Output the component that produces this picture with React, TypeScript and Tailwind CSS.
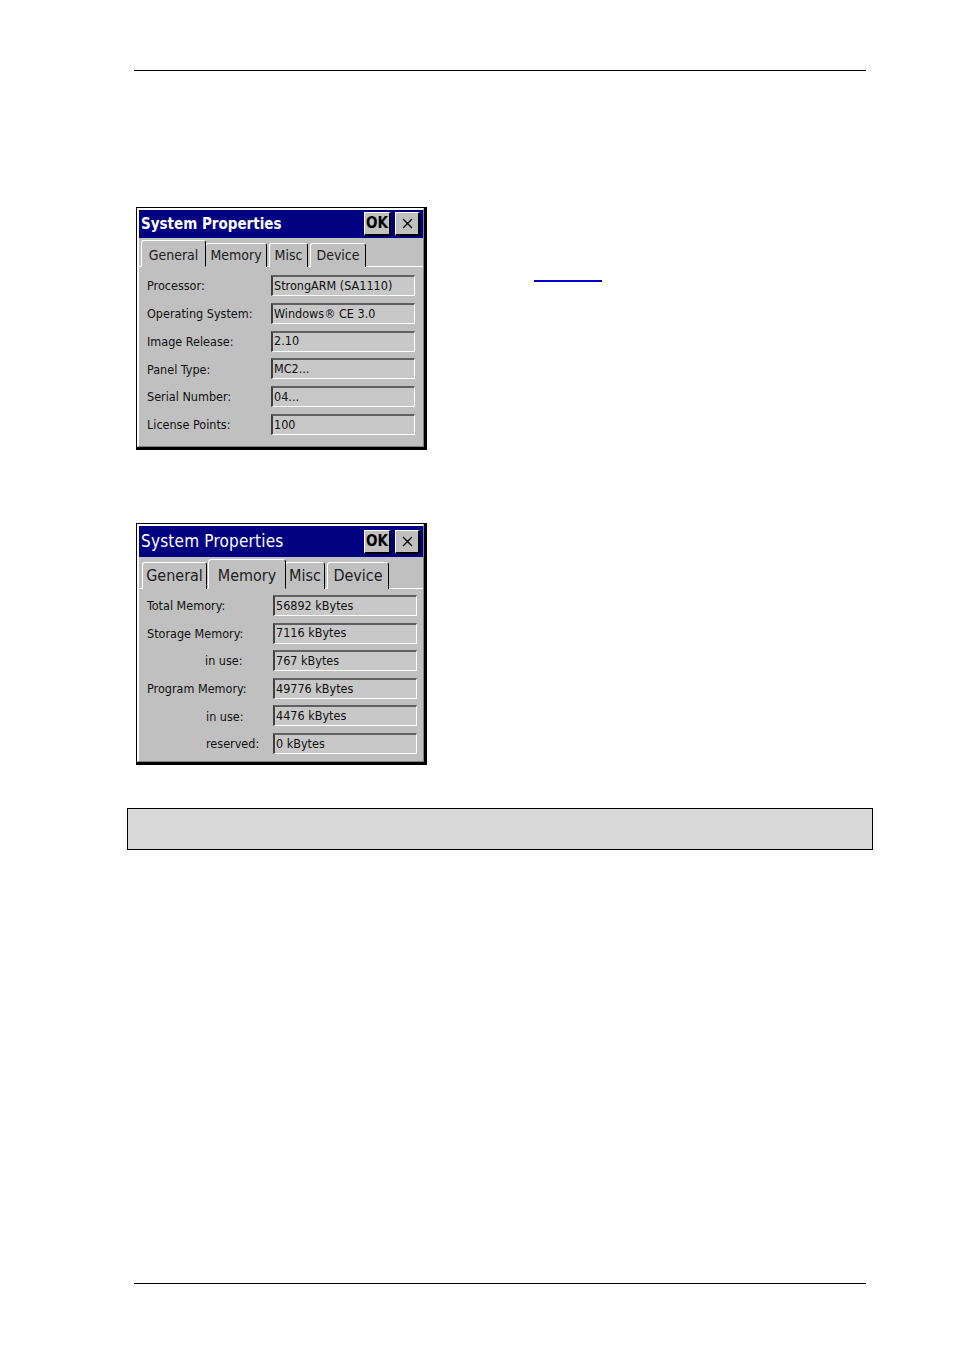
import React from "react";

const font = { fontFamily: "Tahoma, 'DejaVu Sans Condensed', 'Liberation Sans', sans-serif" };

function TitleBar({ big }: { big?: boolean }) {
  return (
    <div className={`flex items-center justify-between bg-[#000080] pl-[2px] pr-[3px] ${big ? "h-[31px]" : "h-[28px]"}`}>
      <span
        className={`text-white ${big ? "text-[17px] font-normal" : "text-[15px] font-bold"} leading-none`}
        style={{ fontFamily: "'DejaVu Sans Condensed', 'Liberation Sans', sans-serif", letterSpacing: big ? "0.2px" : "0px" }}
      >
        System Properties
      </span>
      <div className="flex items-center gap-[4px]">
        <div className="flex h-[24px] w-[27px] items-center justify-center border-t border-l border-t-white border-l-white border-r-2 border-b-2 border-r-black border-b-black bg-[#c0c0c0] text-[15px] font-bold leading-none text-black" style={{ fontFamily: "'DejaVu Sans Condensed', sans-serif" }}>
          OK
        </div>
        <div className="flex h-[24px] w-[25px] items-center justify-center border-t border-l border-t-white border-l-white border-r-2 border-b-2 border-r-black border-b-black bg-[#c0c0c0] text-black">
          <svg width="11" height="11" viewBox="0 0 11 11">
            <path d="M1 1 L10 10 M10 1 L1 10" stroke="black" strokeWidth="1.4" />
          </svg>
        </div>
      </div>
    </div>
  );
}

function Tabs({ tabs, selected, big }: { tabs: { label: string; w: number }[]; selected: number; big?: boolean }) {
  return (
    <div className={`relative flex items-end pl-[3px] ${big ? "h-[32px]" : "h-[29px]"}`}>
      <div className="absolute bottom-0 left-0 right-0 h-px bg-white" />
      {tabs.map((t, i) => {
        const sel = i === selected;
        return (
          <div
            key={t.label}
            style={{ width: t.w }}
            className={`relative flex items-end justify-center rounded-t-[3px] border-t border-l border-t-white border-l-white border-r border-r-black bg-[#c0c0c0] ${sel ? (big ? "h-[30px] -mx-px z-10 border-b border-b-[#c0c0c0] pb-[4px]" : "h-[27px] -mx-px z-10 border-b border-b-[#c0c0c0] pb-[4px]") : big ? "h-[27px] mr-[2px] pb-[5px]" : "h-[24px] mr-[2px] pb-[5px]"}`}
          >
            <span className={`${big ? "text-[16px]" : "text-[14px]"} leading-none text-[#202020]`} style={{ fontFamily: "'DejaVu Sans Condensed', 'Liberation Sans', sans-serif" }}>
              {t.label}
            </span>
          </div>
        );
      })}
    </div>
  );
}

function Row({ label, value, indent, fieldLeft }: { label: string; value: string; indent?: number; fieldLeft: number }) {
  return (
    <div className="flex h-[21px] items-center">
      <div style={{ width: fieldLeft, paddingLeft: indent ?? 0 }} className="pt-[2px] text-[12.5px] leading-none text-[#101010]">
        <span style={{ fontFamily: "'DejaVu Sans Condensed', 'Liberation Sans', sans-serif" }}>{label}</span>
      </div>
      <div className="flex h-[21px] w-[144px] items-center border-t-2 border-l-2 border-t-[#606060] border-l-[#404040] border-r border-b border-r-white border-b-white bg-[#c8c8c8] pl-px text-[12.5px] leading-none text-[#101010]">
        <span style={{ fontFamily: "'DejaVu Sans Condensed', 'Liberation Sans', sans-serif" }}>{value}</span>
      </div>
    </div>
  );
}

function Dialog({ children }: { children: React.ReactNode }) {
  return (
    <div className="w-[291px] border-t border-l border-black border-r-[3px] border-b-[3px] bg-[#c0c0c0]">
      <div className="border-t-2 border-l-2 border-white border-r border-b border-r-[#808080] border-b-[#808080]">{children}</div>
    </div>
  );
}

export default function App() {
  return (
    <div className="relative h-[1350px] w-[954px] bg-white" style={font}>
      <div className="absolute left-[134px] top-[70px] h-px w-[732px] bg-black" />

      <div className="absolute left-[136px] top-[207px]">
        <Dialog>
          <TitleBar />
          <Tabs
            selected={0}
            tabs={[
              { label: "General", w: 65 },
              { label: "Memory", w: 62 },
              { label: "Misc", w: 39 },
              { label: "Device", w: 56 },
            ]}
          />
          <div className="flex flex-col gap-[6.8px] pl-[8px] pt-[8px] pb-[11px]">
            <Row fieldLeft={124} label="Processor:" value="StrongARM (SA1110)" />
            <Row fieldLeft={124} label="Operating System:" value="Windows® CE 3.0" />
            <Row fieldLeft={124} label="Image Release:" value="2.10" />
            <Row fieldLeft={124} label="Panel Type:" value="MC2..." />
            <Row fieldLeft={124} label="Serial Number:" value="04..." />
            <Row fieldLeft={124} label="License Points:" value="100" />
          </div>
        </Dialog>
      </div>

      <div className="absolute left-[534px] top-[280px] h-[2px] w-[68px] bg-[#0000cc]" />

      <div className="absolute left-[136px] top-[523px]">
        <Dialog>
          <TitleBar big />
          <Tabs
            big
            selected={1}
            tabs={[
              { label: "General", w: 65 },
              { label: "Memory", w: 78 },
              { label: "Misc", w: 40 },
              { label: "Device", w: 62 },
            ]}
          />
          <div className="flex flex-col gap-[6.6px] pl-[8px] pt-[6px] pb-[7px]">
            <Row fieldLeft={126} label="Total Memory:" value="56892 kBytes" />
            <Row fieldLeft={126} label="Storage Memory:" value="7116 kBytes" />
            <Row fieldLeft={126} indent={58} label="in use:" value="767 kBytes" />
            <Row fieldLeft={126} label="Program Memory:" value="49776 kBytes" />
            <Row fieldLeft={126} indent={59} label="in use:" value="4476 kBytes" />
            <Row fieldLeft={126} indent={59} label="reserved:" value="0 kBytes" />
          </div>
        </Dialog>
      </div>

      <div className="absolute left-[127px] top-[808px] h-[42px] w-[746px] border border-black bg-[#d9d9d9]" />

      <div className="absolute left-[134px] top-[1283px] h-px w-[732px] bg-black" />
    </div>
  );
}
